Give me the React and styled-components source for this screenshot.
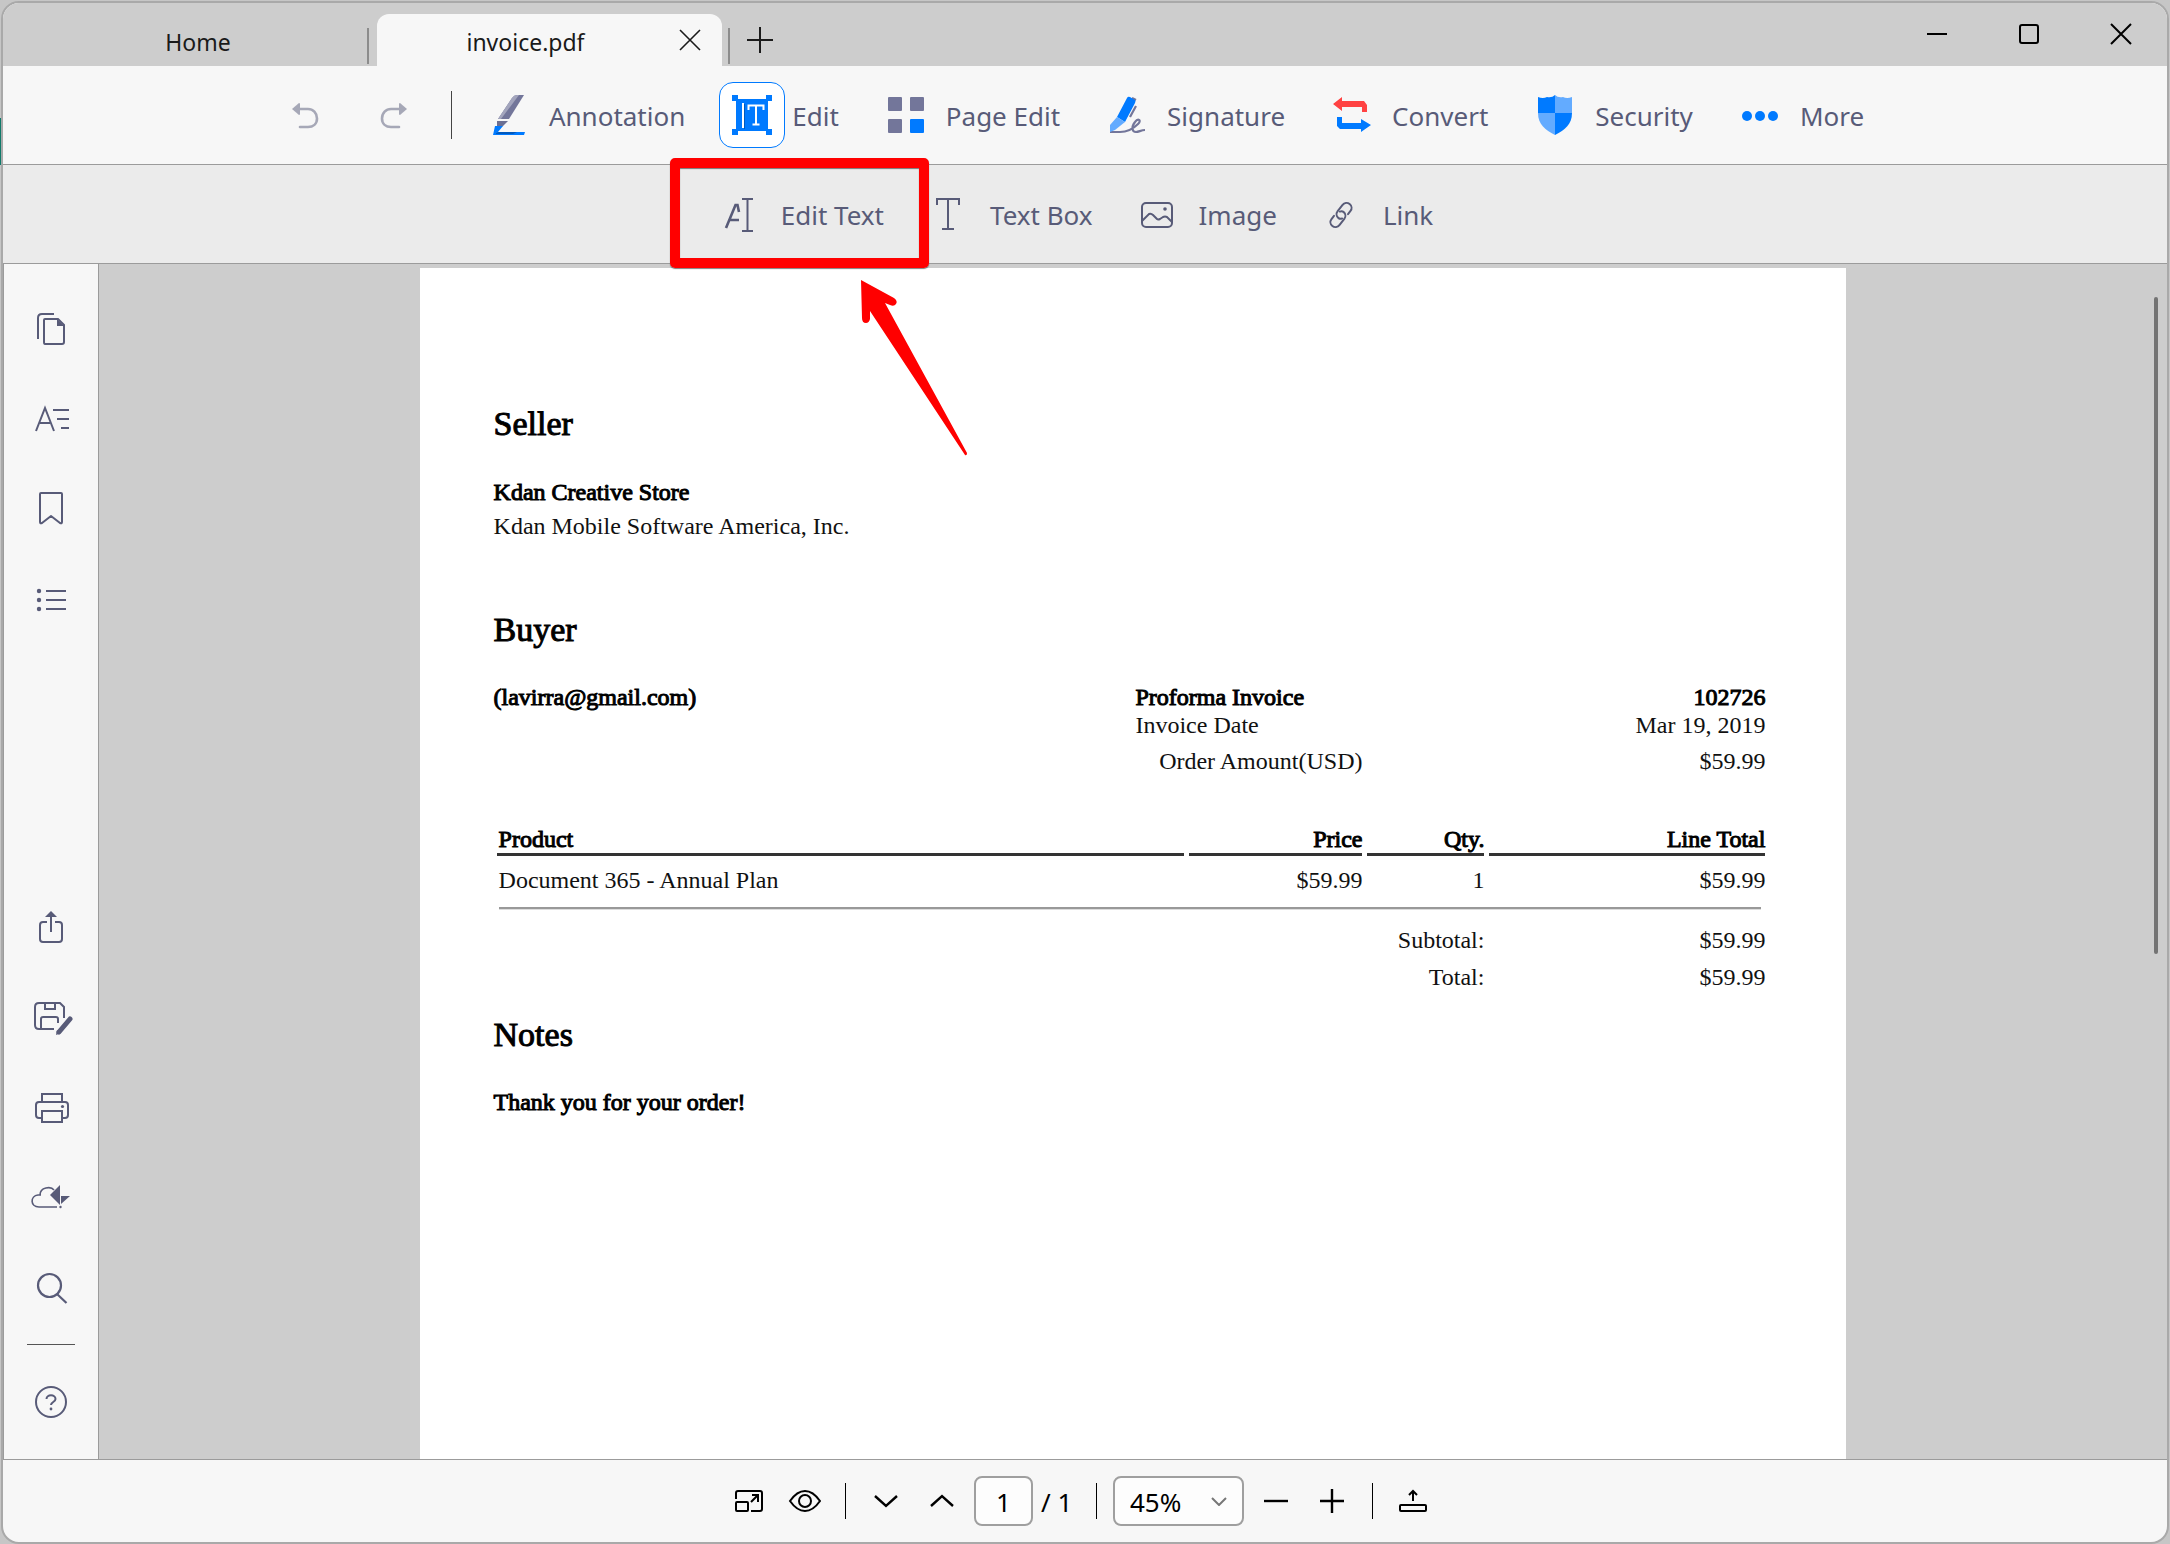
import React, { useState } from 'react';
import styled, { createGlobalStyle, css } from 'styled-components';

const GlobalStyle = createGlobalStyle`
    * {
        box-sizing: border-box;
    }
    body {
        margin: 0;
        background: linear-gradient(#0f7a6a, #0f7a6a) 0 118px / 4px 47px no-repeat, #c6c6c6;
        font-family: 'Noto Sans', 'Open Sans', sans-serif;
        color: #1a1a1a;
    }
    button, input, select {
        font: inherit;
        color: inherit;
    }
    button {
        padding: 0;
        border: 0;
        background: none;
        cursor: pointer;
    }
`;

const ink = '#585b78';
const blue = '#007aff';
const line = '#9b9b9b';

const Desktop = styled.div`
    height: 100vh;
    padding: 1px 1px 0;
`;

const Window = styled.div`
    position: relative;
    display: flex;
    flex-direction: column;
    height: 100%;
    border: 2px solid #a9a9a9;
    border-radius: 18px;
    background: #f7f7f7;
    overflow: hidden;
`;

/* ---------- title bar ---------- */

const TitleBar = styled.header`
    display: flex;
    align-items: flex-end;
    height: 63px;
    flex: none;
    background: #cdcdcd;
`;

const Tab = styled.div`
    display: grid;
    align-items: center;
    height: 52px;
    font-size: 23px;

    ${({ $active }) =>
        $active
            ? css`
                  grid-template-columns: 16px 1fr 64px;
                  width: 345px;
                  margin: 0 6px 0 8px;
                  border-radius: 12px 12px 0 0;
                  background: #f7f7f7;
              `
            : css`
                  grid-template-columns: 26px 1fr;
                  width: 364px;
              `}
`;

const TabName = styled.button`
    grid-column: 2;
    height: 52px;
    padding-top: 4px;
    text-align: center;
`;

const TabClose = styled.button`
    display: grid;
    place-items: center;
    height: 52px;
`;

const TabDivider = styled.span`
    width: 2px;
    height: 36px;
    margin-bottom: 2px;
    background: #8c8c8c;
`;

const NewTab = styled.button`
    display: grid;
    place-items: center;
    width: 60px;
    height: 52px;
`;

const WindowControls = styled.div`
    display: flex;
    align-self: flex-start;
    margin-left: auto;
`;

const WindowButton = styled.button`
    display: grid;
    place-items: center;
    width: 92px;
    height: 62px;
`;

/* ---------- toolbars ---------- */

const Toolbar = styled.nav`
    display: flex;
    justify-content: center;
    align-items: center;
    height: 99px;
    flex: none;
    border-bottom: 1px solid ${line};
    background: ${({ $sub }) => ($sub ? '#ebebeb' : '#f7f7f7')};
`;

const HistoryGroup = styled.div`
    display: flex;
    gap: 23px;
    opacity: 0.5;
`;

const IconBox = styled.span`
    display: grid;
    place-items: center;
    width: 66px;
    height: 66px;
    border: 1px solid ${({ $active }) => ($active ? blue : 'transparent')};
    border-radius: 14px;
    background: ${({ $active }) => ($active ? '#fff' : 'none')};
`;

const ToolDivider = styled.span`
    width: 1px;
    height: 48px;
    margin: 0 24px;
    background: #444;
`;

const Tool = styled.button`
    display: flex;
    align-items: center;
    gap: ${({ $sub }) => ($sub ? 9 : 7)}px;
    padding-right: ${({ $sub }) => ($sub ? 31 : 34)}px;
    color: ${ink};
    font-size: 26px;
    white-space: nowrap;
`;

const ToolLabel = styled.span`
    padding-top: 2px;
`;

const ToolSlot = styled.div`
    position: relative;
`;

const Highlight = styled.div`
    position: absolute;
    z-index: 2;
    top: -23px;
    left: -36px;
    width: 259px;
    height: 110px;
    border: 10px solid #ff0000;
    border-radius: 5px;
    box-shadow: 0 1px 1px rgba(0, 0, 0, 0.5), inset 0 1px 1px rgba(0, 0, 0, 0.5);
    pointer-events: none;
`;

const Pointer = styled.svg`
    position: absolute;
    z-index: 2;
    top: 98px;
    left: 154px;
    pointer-events: none;
`;

/* ---------- body ---------- */

const Body = styled.div`
    display: flex;
    flex: 1;
    min-height: 0;
`;

const Sidebar = styled.aside`
    display: flex;
    flex-direction: column;
    width: 96px;
    padding: 20px 0 12px;
    border-left: 1px solid ${line};
    border-right: 1px solid ${line};
`;

const SideButton = styled.button`
    display: grid;
    place-items: center;
    height: 90px;
    color: ${ink};
`;

const SideSpacer = styled.div`
    flex: 1;
`;

const SideDivider = styled.span`
    align-self: center;
    width: 48px;
    height: 1px;
    margin: 11px 0 12px;
    background: #555;
`;

const Canvas = styled.main`
    position: relative;
    display: flex;
    justify-content: center;
    flex: 1;
    padding-top: 4px;
    background: #cdcdcd;
    overflow: hidden;
`;

const ScrollThumb = styled.div`
    position: absolute;
    top: 33px;
    right: 9px;
    width: 4px;
    height: 55%;
    border-radius: 2px;
    background: #737373;
`;

/* ---------- invoice ---------- */

const Page = styled.article`
    width: 69%;
    padding: 136px 81px 0 74px;
    background: #fff;
    color: #111;
    font-family: 'Liberation Serif', 'Times New Roman', serif;
    font-size: 24px;
    line-height: 28px;
`;

const heavy = css`
    font-weight: 400;
    color: #000;
    -webkit-text-stroke: 1px #000;
`;

const Title = styled.h2`
    margin: 0 0 33px;
    font-size: 34px;
    line-height: 40px;
    ${heavy}
`;

const Strong = styled.strong`
    ${heavy}
`;

const Address = styled.div`
    display: flex;
    flex-direction: column;
    margin: -2px 0 67px;
    line-height: 34px;
`;

const BuyerRow = styled.div`
    display: flex;
    justify-content: space-between;
    align-items: flex-start;
    margin-bottom: 50px;
`;

const Summary = styled.table`
    width: 630px;
    border-collapse: collapse;

    th {
        width: 227px;
        padding: 0;
        font-weight: 400;
        text-align: left;
    }
    td {
        padding: 0;
        text-align: right;
    }
    tr:last-child > * {
        padding-top: 8px;
    }
    tr:last-child > th {
        text-align: right;
    }
`;

const Lines = styled.table`
    width: calc(100% + 7px);
    margin: 0 0 24px -2px;
    border-spacing: 5px 0;
    table-layout: fixed;
    transform: none;

    th, td {
        padding: 0;
        text-align: right;
    }
    th {
        border-bottom: 3px solid #333;
        ${heavy}
    }
    th:first-child, td:first-child {
        padding-left: 2px;
        text-align: left;
    }
    tbody td {
        padding-top: 10px;
    }
    tfoot tr + tr > td {
        padding-top: 9px;
    }
    td[colspan='4'] {
        padding: 13px 4px 7px 2px;
    }
`;

const Rule = styled.hr`
    height: 3px;
    margin: 0;
    border: 0;
    border-top: 2px solid #999;
    border-bottom: 1px solid #ddd;
`;

/* ---------- status bar ---------- */

const StatusBar = styled.footer`
    display: flex;
    justify-content: center;
    align-items: center;
    height: 83px;
    flex: none;
    padding-right: 8px;
    border-top: 1px solid ${line};
    font-size: 26px;
    color: #000;
`;

const StatusButton = styled.button`
    display: grid;
    place-items: center;
    width: 56px;
    height: 50px;
`;

const StatusDivider = styled.span`
    width: 1px;
    height: 36px;
    margin: 0 ${({ $tight }) => ($tight ? 0 : 12)}px;
    background: #000;
`;

const PageInput = styled.input`
    width: 59px;
    height: 50px;
    margin-left: 4px;
    padding: 2px 0 0;
    border: 2px solid #9f9f9f;
    border-radius: 8px;
    background: #fdfdfd;
    text-align: center;
`;

const PageCount = styled.span`
    width: 63px;
    padding: 2px 0 0 8px;
    white-space: pre;
`;

const ZoomBox = styled.label`
    position: relative;
    width: 131px;
    height: 50px;
    margin: 0 4px 0 16px;

    svg {
        position: absolute;
        top: 21px;
        right: 17px;
        pointer-events: none;
    }
`;

const ZoomSelect = styled.select`
    appearance: none;
    width: 100%;
    height: 100%;
    padding: 2px 40px 0 15px;
    border: 2px solid #9f9f9f;
    border-radius: 8px;
    background: #fdfdfd;
`;

/* ---------- icons ---------- */

const Icon = ({ size = 40, children, ...rest }) => (
    <svg
        width={size}
        height={size}
        viewBox={`0 0 ${size} ${size}`}
        fill="none"
        stroke="currentColor"
        strokeWidth="2"
        overflow="visible"
        aria-hidden="true"
        {...rest}
    >
        {children}
    </svg>
);

const UndoIcon = () => (
    <Icon stroke={ink} strokeWidth="2.6">
        <path d="M14 14H23C28 14 32 18 32 23.500C32 29 28 32 23 32H15" strokeLinecap="round" />
        <path d="M7 14L14 8Q15 8 15 9V19Q15 20 14 20Z" fill={ink} stroke="none" />
    </Icon>
);

const RedoIcon = () => (
    <Icon stroke={ink} strokeWidth="2.6">
        <path d="M26 14H17C12 14 8 18 8 23.500C8 29 12 32 17 32H25" strokeLinecap="round" />
        <path d="M33 14L26 8Q25 8 25 9V19Q25 20 26 20Z" fill={ink} stroke="none" />
    </Icon>
);

const AnnotationIcon = () => (
    <Icon stroke="none">
        <path d="M23 3Q25 0 28 0H35L20 24H9Z" fill="#73769a" />
        <path d="M23 3Q25 0 28 0H30L12 24H9Z" fill="#a3a5bd" />
        <path d="M8 26H19L14 31L8 33Z" fill="#6c6f92" />
        <path d="M6 31H14L9 37H36L35 40H4Z" fill={blue} />
        <path d="M7 38L10 37H28L24 39H7Z" fill="#0059bd" />
    </Icon>
);

const EditIcon = () => (
    <Icon stroke="#fff" strokeWidth="2">
        <g fill={blue} stroke="none">
            <rect x="4" y="4" width="32" height="32" />
            <rect x="0" y="0" width="6" height="6" />
            <rect x="34" y="0" width="6" height="6" />
            <rect x="0" y="34" width="6" height="6" />
            <rect x="34" y="34" width="6" height="6" />
        </g>
        <path d="M11 8V33" />
        <path d="M12.500 9V34" stroke="#0059bd" strokeWidth="1" />
        <path d="M16.500 15V10.500H31.500V15M24 10.500V29.500M20.500 29.500H27.500" />
    </Icon>
);

const PageEditIcon = () => (
    <Icon stroke="none" fill="#73769a">
        <rect x="2" y="2" width="14" height="14" rx="1" />
        <rect x="24" y="2" width="14" height="14" rx="1" />
        <rect x="2" y="24" width="14" height="14" rx="1" />
        <rect x="24" y="24" width="14" height="14" rx="1" fill={blue} />
    </Icon>
);

const SignatureIcon = () => (
    <Icon stroke="#73769a" strokeWidth="2.200">
        <path d="M3 37H13C20 37 27 33 31 29C35 25 31 23 28 27C24 32 25 37 29 37C32 37 34 35 38 35" />
        <path d="M25 3L29 5M29 11L23 22" />
        <path d="M10 22L20 3Q21 1 23 2L28 5Q29 6 28 8L18 27Z" fill={blue} stroke="none" />
        <path d="M10 22L18 27L8 35L3 37V30Z" fill="#63abff" stroke="none" />
    </Icon>
);

const ConvertIcon = () => (
    <Icon stroke="none">
        <path d="M1 9L10 2V6H32L35 10V17H30V12H10V16Z" fill="#ff4242" />
        <path d="M5 22H10V28H29V24L39 30L29 37V34H8L5 31Z" fill={blue} />
    </Icon>
);

const SecurityIcon = () => (
    <Icon stroke="none">
        <path d="M3 2Q8 4 12 2Q17 3 20 0V18H3Z" fill={blue} />
        <path d="M37 2Q32 4 28 2Q23 3 20 0V18H37Z" fill="#63abff" />
        <path d="M3 18H20V40C10 35 3 29 3 18Z" fill="#63abff" />
        <path d="M37 18H20V40C30 35 37 29 37 18Z" fill={blue} />
    </Icon>
);

const MoreIcon = () => (
    <Icon stroke="none" fill={blue}>
        <circle cx="7" cy="21" r="5" />
        <circle cx="20" cy="21" r="5" />
        <circle cx="33" cy="21" r="5" />
    </Icon>
);

const EditTextIcon = () => (
    <Icon>
        <path d="M7 34L16.500 11H18.500L20 18M11 26H20" strokeWidth="2.600" />
        <path d="M23 5H34M28.500 5V37M23 37H34" />
    </Icon>
);

const TextBoxIcon = () => (
    <Icon>
        <path d="M9 11V5H31V11M20 5V35M14 35H26" />
    </Icon>
);

const ImageIcon = () => (
    <Icon>
        <rect x="5" y="9" width="30" height="24" rx="4" />
        <path d="M5 27L12 20Q14 19 16 21L20 25Q21 26 23 25L26 23Q28 22 30 23L35 28" />
        <circle cx="28" cy="15" r="1.800" fill="currentColor" stroke="none" />
    </Icon>
);

const LinkIcon = () => (
    <Icon>
        <g transform="translate(20 21) rotate(-52)" strokeLinecap="round">
            <path d="M5 5H9A5 5 0 0 0 9 -5H1A5 5 0 0 0 -4 0Q-4 2 -2 3" />
            <path d="M-5 -5H-9A5 5 0 0 0 -9 5H-1A5 5 0 0 0 4 0Q4 -2 2 -3" />
        </g>
    </Icon>
);

const PagesIcon = () => (
    <Icon>
        <path d="M7 30V9Q7 5 11 5H23" />
        <path d="M14 10H27L33 16V33Q33 35 31 35H14Q13 35 13 33V11Q13 10 14 10Z" />
        <path d="M26 10L33 17H26Z" fill="currentColor" stroke="none" />
    </Icon>
);

const OutlineTextIcon = () => (
    <Icon>
        <path d="M5 32L14 9L23 32M9 24H19" />
        <path d="M22 11H38M26 20H38M30 29H38" />
    </Icon>
);

const BookmarkIcon = () => (
    <Icon strokeLinejoin="round">
        <path d="M10 4H30Q31 4 31 5V33Q31 35 29 34L20 27L11 34Q9 35 9 33V5Q9 4 10 4Z" />
    </Icon>
);

const ListIcon = () => (
    <Icon>
        <path d="M15 12H35M15 21H35M15 30H35" />
        <g fill="currentColor" stroke="none">
            <circle cx="8" cy="12" r="2.200" />
            <circle cx="8" cy="21" r="2.200" />
            <circle cx="8" cy="30" r="2.200" />
        </g>
    </Icon>
);

const ShareIcon = () => (
    <Icon>
        <path d="M16 14H12Q9 14 9 17V31Q9 34 12 34H28Q31 34 31 31V17Q31 14 28 14H24M20 7V24" />
        <path d="M20 3L26 9H14Z" fill="currentColor" stroke="none" />
    </Icon>
);

const SaveAsIcon = () => (
    <Icon>
        <path d="M23 31H8Q4 31 4 27V9Q4 5 8 5H29L33 9V20M14 5V11H24V5M10 31V21Q10 19 12 19H25Q27 19 27 21V25" />
        <path d="M28 34L39 21" strokeWidth="5" strokeLinecap="round" />
        <path d="M25 37L26 32L30 35Z" fill="currentColor" stroke="none" />
    </Icon>
);

const PrintIcon = () => (
    <Icon>
        <path d="M11 14V6H31V14M11 30H8Q5 30 5 27V17Q5 14 8 14H34Q37 14 37 17V27Q37 30 34 30H31" />
        <rect x="11" y="23" width="20" height="11" />
        <circle cx="31.500" cy="18.500" r="1.600" fill="currentColor" stroke="none" />
    </Icon>
);

const CloudIcon = () => (
    <Icon strokeWidth="1.600">
        <path d="M26 29H8C-1 29 -1 18 7 17H10M9 17C9 9 20 8 23 12" />
        <g fill="currentColor" stroke="none">
            <path d="M19 17L29 7V27Z" />
            <path d="M30 18H39L30 26Z" />
            <circle cx="29.500" cy="29" r="1.200" />
        </g>
    </Icon>
);

const SearchIcon = () => (
    <Icon strokeWidth="2.200">
        <circle cx="18.500" cy="17.500" r="11.500" />
        <path d="M26.500 26.500L35.500 35" />
    </Icon>
);

const HelpIcon = () => (
    <Icon>
        <circle cx="20" cy="20" r="15" />
        <path d="M15.500 17C15.500 12 24.500 12 24.500 17C24.500 20 20 20 20 23" />
        <circle cx="20" cy="27" r="1.400" fill="currentColor" stroke="none" />
    </Icon>
);

const FitIcon = () => (
    <Icon size={30}>
        <path d="M2 13V7Q2 5 4 5H26Q28 5 28 7V23Q28 25 26 25H17" />
        <rect x="2" y="16" width="12" height="9" rx="1" />
        <path d="M17 16L24 9M18 9H24V16" />
    </Icon>
);

const EyeIcon = () => (
    <Icon size={32}>
        <path d="M1 16Q8 6 16 6T31 16Q24 26 16 26T1 16Z" />
        <circle cx="16" cy="16" r="6" />
    </Icon>
);

const UploadIcon = () => (
    <Icon size={28}>
        <rect x="1" y="18" width="26" height="6" rx="1" />
        <path d="M14 14V5M10 8L14 4L18 8" />
    </Icon>
);

/* ---------- data ---------- */

const tools = [
    { label: 'Annotation', icon: <AnnotationIcon /> },
    { label: 'Edit', icon: <EditIcon /> },
    { label: 'Page Edit', icon: <PageEditIcon /> },
    { label: 'Signature', icon: <SignatureIcon /> },
    { label: 'Convert', icon: <ConvertIcon /> },
    { label: 'Security', icon: <SecurityIcon /> },
    { label: 'More', icon: <MoreIcon /> },
];

const editTools = [
    { label: 'Edit Text', icon: <EditTextIcon />, highlight: true },
    { label: 'Text Box', icon: <TextBoxIcon /> },
    { label: 'Image', icon: <ImageIcon /> },
    { label: 'Link', icon: <LinkIcon /> },
];

const panelButtons = [
    { label: 'Thumbnails', icon: <PagesIcon /> },
    { label: 'Outline', icon: <OutlineTextIcon /> },
    { label: 'Bookmarks', icon: <BookmarkIcon /> },
    { label: 'Annotation list', icon: <ListIcon /> },
];

const fileButtons = [
    { label: 'Share', icon: <ShareIcon /> },
    { label: 'Save as', icon: <SaveAsIcon /> },
    { label: 'Print', icon: <PrintIcon /> },
    { label: 'Cloud', icon: <CloudIcon /> },
    { label: 'Search', icon: <SearchIcon /> },
];

function SideButtons({ items }) {
    return items.map(({ label, icon }) => (
        <SideButton key={label} aria-label={label}>
            {icon}
        </SideButton>
    ));
}

function Invoice() {
    return (
        <Page>
            <Title>Seller</Title>
            <Address>
                <Strong>Kdan Creative Store</Strong>
                <span>Kdan Mobile Software America, Inc.</span>
            </Address>

            <Title>Buyer</Title>
            <BuyerRow>
                <Strong>(lavirra@gmail.com)</Strong>
                <Summary>
                    <tbody>
                        <tr>
                            <th scope="row">
                                <Strong>Proforma Invoice</Strong>
                            </th>
                            <td>
                                <Strong>102726</Strong>
                            </td>
                        </tr>
                        <tr>
                            <th scope="row">Invoice Date</th>
                            <td>Mar 19, 2019</td>
                        </tr>
                        <tr>
                            <th scope="row">Order Amount(USD)</th>
                            <td>$59.99</td>
                        </tr>
                    </tbody>
                </Summary>
            </BuyerRow>

            <Lines>
                <colgroup>
                    <col />
                    <col width="173" />
                    <col width="117" />
                    <col width="276" />
                </colgroup>
                <thead>
                    <tr>
                        <th scope="col">Product</th>
                        <th scope="col">Price</th>
                        <th scope="col">Qty.</th>
                        <th scope="col">Line Total</th>
                    </tr>
                </thead>
                <tbody>
                    <tr>
                        <td>Document 365 - Annual Plan</td>
                        <td>$59.99</td>
                        <td>1</td>
                        <td>$59.99</td>
                    </tr>
                </tbody>
                <tfoot>
                    <tr>
                        <td colSpan="4">
                            <Rule />
                        </td>
                    </tr>
                    <tr>
                        <td />
                        <td />
                        <td>Subtotal:</td>
                        <td>$59.99</td>
                    </tr>
                    <tr>
                        <td />
                        <td />
                        <td>Total:</td>
                        <td>$59.99</td>
                    </tr>
                </tfoot>
            </Lines>

            <Title>Notes</Title>
            <Strong>Thank you for your order!</Strong>
        </Page>
    );
}

function App() {
    const [activeTool, setActiveTool] = useState('Edit');
    const [page, setPage] = useState('1');
    const [zoom, setZoom] = useState('45%');

    return (
        <Desktop>
            <GlobalStyle />
            <Window>
                <TitleBar>
                    <Tab>
                        <TabName>Home</TabName>
                    </Tab>
                    <TabDivider />
                    <Tab $active>
                        <TabName>invoice.pdf</TabName>
                        <TabClose aria-label="Close tab">
                            <Icon size={22} strokeWidth="1.600">
                                <path d="M1 1L21 21M21 1L1 21" />
                            </Icon>
                        </TabClose>
                    </Tab>
                    <TabDivider />
                    <NewTab aria-label="New tab">
                        <Icon size={26}>
                            <path d="M13 0V26M0 13H26" />
                        </Icon>
                    </NewTab>
                    <WindowControls>
                        <WindowButton aria-label="Minimize">
                            <Icon size={20} stroke="#000">
                                <path d="M0 10H20" />
                            </Icon>
                        </WindowButton>
                        <WindowButton aria-label="Maximize">
                            <Icon size={20} stroke="#000">
                                <rect x="1" y="1" width="18" height="18" rx="2" />
                            </Icon>
                        </WindowButton>
                        <WindowButton aria-label="Close">
                            <Icon size={20} stroke="#000">
                                <path d="M0 0L20 20M20 0L0 20" />
                            </Icon>
                        </WindowButton>
                    </WindowControls>
                </TitleBar>

                <Toolbar aria-label="Tools">
                    <HistoryGroup>
                        <button aria-label="Undo">
                            <IconBox>
                                <UndoIcon />
                            </IconBox>
                        </button>
                        <button aria-label="Redo">
                            <IconBox>
                                <RedoIcon />
                            </IconBox>
                        </button>
                    </HistoryGroup>
                    <ToolDivider />
                    {tools.map(({ label, icon }) => (
                        <Tool key={label} onClick={() => setActiveTool(label)}>
                            <IconBox $active={label === activeTool}>{icon}</IconBox>
                            <ToolLabel>{label}</ToolLabel>
                        </Tool>
                    ))}
                </Toolbar>

                <Toolbar $sub aria-label="Edit tools">
                    {editTools.map(({ label, icon, highlight }) => (
                        <ToolSlot key={label}>
                            <Tool $sub>
                                <IconBox>{icon}</IconBox>
                                <ToolLabel>{label}</ToolLabel>
                            </Tool>
                            {highlight && (
                                <>
                                    <Highlight />
                                    <Pointer width="108" height="178" viewBox="0 0 108 178" fill="#ff0000">
                                        <path d="M1 1L34 19Q38 22 36 25Q34 28 30 26L25 24L107 174Q107 177 105 176L10 32V40Q9 44 6 44Q2 44 2 39Z" />
                                    </Pointer>
                                </>
                            )}
                        </ToolSlot>
                    ))}
                </Toolbar>

                <Body>
                    <Sidebar>
                        <SideButtons items={panelButtons} />
                        <SideSpacer />
                        <SideButtons items={fileButtons} />
                        <SideDivider />
                        <SideButton aria-label="Help">
                            <HelpIcon />
                        </SideButton>
                    </Sidebar>
                    <Canvas>
                        <Invoice />
                        <ScrollThumb />
                    </Canvas>
                </Body>

                <StatusBar>
                    <StatusButton aria-label="Fit page">
                        <FitIcon />
                    </StatusButton>
                    <StatusButton aria-label="Reading view">
                        <EyeIcon />
                    </StatusButton>
                    <StatusDivider />
                    <StatusButton aria-label="Next page">
                        <Icon size={24} strokeWidth="2.400">
                            <path d="M1 7L12 17L23 7" />
                        </Icon>
                    </StatusButton>
                    <StatusButton aria-label="Previous page">
                        <Icon size={24} strokeWidth="2.400">
                            <path d="M1 17L12 7L23 17" />
                        </Icon>
                    </StatusButton>
                    <PageInput aria-label="Page" value={page} onChange={(e) => setPage(e.target.value)} />
                    <PageCount>/ 1</PageCount>
                    <StatusDivider $tight />
                    <ZoomBox>
                        <ZoomSelect aria-label="Zoom" value={zoom} onChange={(e) => setZoom(e.target.value)}>
                            <option>45%</option>
                            <option>100%</option>
                        </ZoomSelect>
                        <svg width="16" height="9" viewBox="0 0 16 9" fill="none" stroke="#777" strokeWidth="2">
                            <path d="M1 1L8 8L15 1" />
                        </svg>
                    </ZoomBox>
                    <StatusButton aria-label="Zoom out">
                        <Icon size={24} strokeWidth="2.400">
                            <path d="M0 12H24" />
                        </Icon>
                    </StatusButton>
                    <StatusButton aria-label="Zoom in">
                        <Icon size={24} strokeWidth="2.400">
                            <path d="M12 0V24M0 12H24" />
                        </Icon>
                    </StatusButton>
                    <StatusDivider />
                    <StatusButton aria-label="Upload">
                        <UploadIcon />
                    </StatusButton>
                </StatusBar>
            </Window>
        </Desktop>
    );
}

export default App;
